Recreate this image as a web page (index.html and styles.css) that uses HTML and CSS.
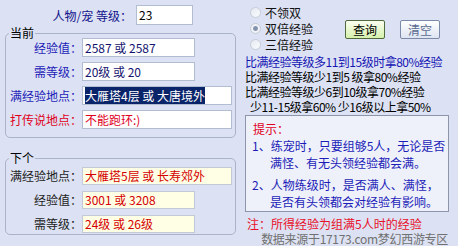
FILE: index.html
```html
<!DOCTYPE html>
<html lang="zh-CN">

<head>
    <meta charset="UTF-8">
    <title>梦幻西游 经验查询</title>
    <link rel="stylesheet" href="styles.css">
</head>

<body>
    <div class="page">
        <div class="left">
            <div class="top-row">
                <span class="top-label">人物/宠 等级：</span>
                <div class="box level">23</div>
            </div>

            <fieldset class="group now">
                <legend>当前</legend>
                <div class="row"><span class="lbl">经验值：</span><div class="box short">2587 或 2587</div></div>
                <div class="row"><span class="lbl">需等级：</span><div class="box short">20级 或 20</div></div>
                <div class="row"><span class="lbl">满经验地点：</span><div class="box long"><span class="sel">大雁塔4层 或 大唐境外</span></div></div>
                <div class="row"><span class="lbl red">打传说地点：</span><div class="box long red">不能跑环:)</div></div>
            </fieldset>

            <fieldset class="group next">
                <legend>下个</legend>
                <div class="row"><span class="lbl">满经验地点：</span><div class="box long">大雁塔5层 或 长寿郊外</div></div>
                <div class="row"><span class="lbl">经验值：</span><div class="box short">3001 或 3208</div></div>
                <div class="row"><span class="lbl">需等级：</span><div class="box short">24级 或 26级</div></div>
            </fieldset>
        </div>

        <div class="right">
            <div class="controls">
                <div class="radios">
                    <label class="radio"><span class="dot"></span>不领双</label>
                    <label class="radio checked"><span class="dot"></span>双倍经验</label>
                    <label class="radio"><span class="dot"></span>三倍经验</label>
                </div>
                <div class="buttons">
                    <button class="btn query">查询</button>
                    <button class="btn clear">清空</button>
                </div>
            </div>

            <div class="rules">
                <div class="blue">比满经验等级多11到15级时拿80%经验</div>
                <div>比满经验等级少1到5 级拿80%经验</div>
                <div>比满经验等级少6到10级拿70%经验</div>
                <div class="indent">少11-15级拿60% 少16级以上拿50%</div>
            </div>

            <div class="tips">
                <div class="tips-title">提示：</div>
                <p>1、练宠时，只要组够5人，无论是否<br>满怪、有无头领经验都会满。</p>
                <p>2、人物练级时，是否满人、满怪，<br>是否有头领都会对经验有影响。</p>
            </div>

            <div class="note">注：所得经验为组满5人时的经验</div>
            <div class="source">数据来源于17173.com梦幻西游专区</div>
        </div>
    </div>
</body>

</html>
```

FILE: styles.css
```css
body {
    margin: 0;
    background-color: #dce2f3;
    font-family: "Noto Sans CJK SC", sans-serif;
    font-size: 12px;
    color: #000;
}

.page {
    display: flex;
    width: 458px;
    height: 246px;
    overflow: hidden;
}

/* left column */
.left {
    width: 236px;
    flex: none;
    padding-top: 5px;
}

.top-row {
    display: flex;
    align-items: center;
    height: 20px;
}

.top-label {
    width: 132px;
    text-align: right;
    color: #12128c;
}

.box {
    box-sizing: border-box;
    border: 1px solid #b3bdd2;
    background-color: #fff;
    padding-left: 2px;
    white-space: nowrap;
    overflow: hidden;
    color: #14146e;
}

.box.level {
    margin-left: 4px;
    width: 57px;
    height: 20px;
    line-height: 18px;
    color: #000;
}

.box.short {
    width: 113px;
}

.box.long {
    width: 150px;
}

.box.red {
    color: #e0001b;
}

.sel {
    background-color: #0a246a;
    color: #fff;
}

.group {
    margin: 3px 0 0 5px;
    width: 231px;
    box-sizing: border-box;
    padding: 0 0 8px 0;
    border: 1px solid #aab3c9;
    border-radius: 5px;
}

.group legend {
    margin-left: 3px;
    padding: 0 1px;
    line-height: 10px;
}

.row {
    display: flex;
    height: 19px;
    margin-top: 5px;
}

.row:first-of-type {
    margin-top: 0;
}

.row .box {
    line-height: 17px;
}

.lbl {
    width: 76px;
    text-align: right;
    line-height: 19px;
    color: #1c1cb8;
}

.lbl.red {
    color: #e0001b;
}

.group.next {
    margin-top: 15px;
    padding: 4px 0 1px 0;
}

.next .row {
    height: 18px;
    margin-top: 6px;
}

.next .row:first-of-type {
    margin-top: 0;
}

.next .lbl {
    color: #222;
    line-height: 18px;
}

.next .box {
    background-color: #ffffe6;
    border-color: #c4c9d6;
    color: #d40000;
    line-height: 16px;
}

/* right column */
.right {
    flex: 1;
}

.controls {
    display: flex;
    padding-top: 4px;
}

.radios {
    margin-left: 14px;
    width: 95px;
}

.radio {
    display: flex;
    align-items: center;
    height: 16px;
    color: #111;
}

.dot {
    width: 11px;
    height: 11px;
    box-sizing: border-box;
    margin-right: 4px;
    border: 1px solid #c6ccd8;
    border-radius: 50%;
    background: linear-gradient(135deg, #e4e8f0, #fbfcfe);
}

.checked .dot {
    background: radial-gradient(circle, #7f8fa8 0, #8b9ab2 2px, #f2f4f8 3px, #e6eaf1 100%);
}

.buttons {
    display: flex;
    gap: 15px;
    margin-top: 16px;
    align-items: flex-start;
}

.btn {
    width: 40px;
    height: 19px;
    padding: 0;
    font-family: inherit;
    font-size: 12px;
    border-radius: 2px;
}

.btn.query {
    border: 1px solid #4f6b3e;
    background: linear-gradient(#fbfff0, #d6f0ac);
    color: #000;
}

.btn.clear {
    border: 1px solid #7b8aa8;
    background: linear-gradient(#ffffff, #dde4f2);
    color: #5a6c90;
}

.rules {
    margin-top: 2px;
    padding-left: 9px;
    line-height: 15px;
    letter-spacing: -0.5px;
    white-space: nowrap;
}

.rules .blue {
    color: #1414b4;
}

.rules .indent {
    padding-left: 5px;
}

.tips {
    margin: 1px 0 0 9px;
    width: 204px;
    box-sizing: border-box;
    border: 1px solid #8d95ab;
    background-color: #eef1fa;
    padding: 4px 0 1px 6px;
    line-height: 17px;
    color: #1c1cb8;
    white-space: nowrap;
}

.tips-title {
    margin-left: 1px;
    color: #e0001b;
}

.tips p {
    margin: 0;
    padding-left: 18px;
    text-indent: -18px;
}

.tips p + p {
    margin-top: 5px;
}

.note {
    margin-top: 4px;
    padding-left: 11px;
    line-height: 16px;
    color: #e8102a;
}

.source {
    padding-right: 10px;
    text-align: right;
    line-height: 13px;
    letter-spacing: -0.3px;
    color: #707070;
    white-space: nowrap;
}
```
